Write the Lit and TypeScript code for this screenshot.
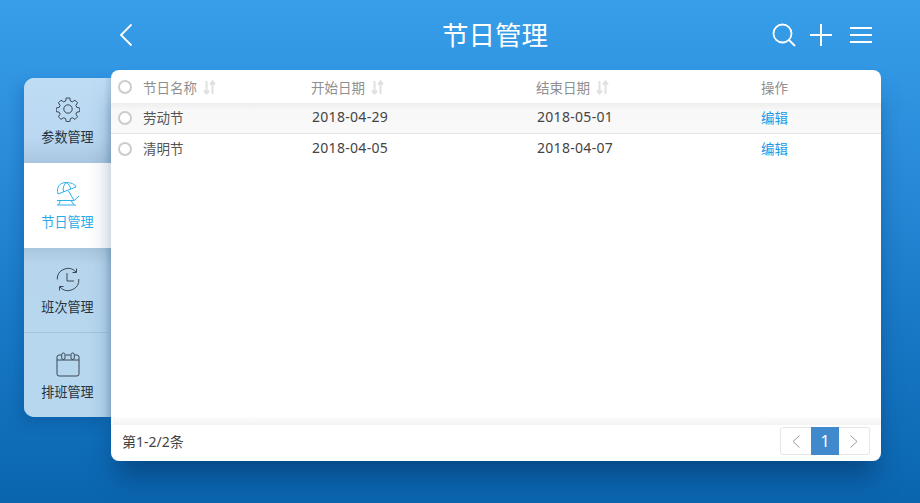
import { LitElement, html, css, svg } from "lit";
import { customElement } from "lit/decorators.js";

const FONT = css`"Noto Sans", "Noto Sans CJK SC", sans-serif`;

const sortIcon = html`<svg class="sort" width="13" height="15" viewBox="0 0 13 15" fill="none" stroke="#e0e0e0">
  <path d="M3.500 1v12M1 10.500 3.500 13.500 6 10.500" stroke-width="2"/><path d="M9.500 14V2M7 4.500 9.500 1.500 12 4.500" stroke-width="2"/></svg>`;

const navIcons = {
  gear: svg`<path d="M10.200 1h3.600l.6 3 2 .9 2.600-1.700 2.600 2.600-1.700 2.600.9 2 3 .6v3.600l-3 .6-.9 2 1.700 2.600-2.600 2.600-2.600-1.700-2 .9-.6 3h-3.600l-.6-3-2-.9-2.600 1.700-2.600-2.600 1.700-2.600-.9-2-3-.6v-3.600l3-.6.9-2-1.700-2.600 2.600-2.600 2.600 1.700 2-.9z"/><circle cx="12" cy="12" r="4.200"/>`,
  umbrella: svg`<path d="M2 12C0 5 4 .5 10 .5c5 .2 9 1.500 10 4.500z"/><path d="M7.500 10C6.500 6 8 2.500 10 .5c2.500 1.500 4.500 3.500 4.500 6.500M12.500 9l5.500 9.500"/><path d="M1 18.500h17l5-4.500M4.500 18.500 2.500 23M15 18.500l3 4.500M1 23h19"/>`,
  clock: svg`<path d="M1.200 12.500A10.800 10.800 0 0 1 20 5M22.800 12A10.800 10.800 0 0 1 4 20"/><path d="M20.500 1.500v4h-4M3.500 23.500v-4h4"/><path d="M11 6v8h7"/>`,
  cal: svg`<path d="M5.500 3H3a2 2 0 0 0-2 2v17a2 2 0 0 0 2 2h18a2 2 0 0 0 2-2V5a2 2 0 0 0-2-2h-2.500M9.500 3h5M1 8h22"/><rect x="5.700" y="1" width="3.300" height="6.500" rx="1.650"/><rect x="15" y="1" width="3.300" height="6.500" rx="1.650"/>`,
};

const nav = [
  { label: "参数管理", icon: navIcons.gear, cls: "first" },
  { label: "节日管理", icon: navIcons.umbrella, cls: "active" },
  { label: "班次管理", icon: navIcons.clock, cls: "after" },
  { label: "排班管理", icon: navIcons.cal, cls: "last" },
];

const rows = [
  { name: "劳动节", start: "2018-04-29", end: "2018-05-01", cls: "alt" },
  { name: "清明节", start: "2018-04-05", end: "2018-04-07", cls: "" },
];

@customElement("app-root")
export class AppRoot extends LitElement {
  static styles = css`
    :host {
      display: block;
      width: 920px;
      height: 503px;
      overflow: hidden;
      font-family: ${FONT};
    }
    .page {
      height: 503px;
      display: flex;
      flex-direction: column;
      background: linear-gradient(180deg, #379ee9 0%, #2d90de 25%, #1a7bc9 60%, #0a65ae 100%);
    }
    .top {
      height: 70px;
      flex: none;
      display: flex;
      align-items: center;
      padding: 0 48px 0 119px;
      color: #fff;
    }
    .title {
      flex: 1;
      text-align: center;
      font-size: 26.500px;
      line-height: 70px;
      color: #fff;
      padding-left: 85px;
    }
    .actions { display: flex; align-items: center; gap: 14px; }
    .top svg { display: block; }
    .menu { margin-left: 4px; }
    .main { flex: 1; display: flex; align-items: flex-start; padding-left: 24px; }
    .side {
      width: 87px;
      height: 339px;
      margin-top: 8px;
      border-radius: 10px 0 0 10px;
      overflow: hidden;
      background: #b7d7ef;
      box-shadow: -4px 6px 14px rgba(5, 60, 120, .25);
      display: flex;
      flex-direction: column;
      flex: none;
    }
    .item {
      --edge: linear-gradient(90deg, rgba(90, 120, 150, 0) 92%, rgba(90, 120, 150, .2) 100%);
      height: 85px;
      flex: none;
      display: flex;
      flex-direction: column;
      align-items: center;
      padding-top: 19px;
      box-sizing: border-box;
      color: #27323d;
      font-size: 13.100px;
      gap: 6px;
      line-height: 18px;
      background: var(--edge), #b7d7ef;
    }
    .item svg { display: block; fill: none; stroke: #3a4654; stroke-width: 1; }
    .item.first { background: var(--edge), linear-gradient(180deg, #bfdcf5 0%, #bad8f1 70%, #a8c6df 100%); }
    .item.active { background: #fff; color: #29abe9; }
    .item.active svg { stroke: #2bb0ec; }
    .item.after {
      background: var(--edge), linear-gradient(180deg, #a8c6dd 0%, #b7d6ee 20%, #b7d7ef 100%);
      border-bottom: 1px solid #a6c3da;
    }
    .item.last { height: 84px; }
    .card {
      width: 770px;
      height: 391px;
      flex: none;
      background: #fff;
      border-radius: 8px;
      display: flex;
      flex-direction: column;
      box-shadow: 0 22px 26px -6px rgba(3, 50, 100, .55);
      overflow: hidden;
    }
    .row {
      display: grid;
      grid-template-columns: 32px 169px 225px 224px 1fr;
      align-items: center;
      flex: none;
      font-size: 14px;
      color: #444;
      letter-spacing: .3px;
    }
    .head { height: 33px; color: #8f8f8f; font-size: 13.500px; letter-spacing: 0; }
    .head .cell { display: flex; align-items: center; gap: 6px; }
    .head .shift { margin-left: -1px; }
    .sort { display: block; margin-top: 1px; }
    .body-row { height: 31px; box-sizing: border-box; border-bottom: 1px solid #fff; padding-bottom: 2px; }
    .body-row.alt {
      background: linear-gradient(180deg, #eeeeee 0%, #f8f8f8 25%, #f9f9f9 100%);
      border-bottom: 1px solid #e4e4e4;
    }
    .date { padding-bottom: 2px; }
    .name { font-size: 13.500px; color: #555; letter-spacing: 0; }
    .check {
      width: 10px;
      height: 10px;
      border: 2px solid #cccccc;
      border-radius: 50%;
      margin: 1px 0 0 7px;
      background: #fff;
    }
    .link { color: #1a9ae6; font-size: 13.500px; letter-spacing: 0; }
    .spacer { flex: 1; }
    .foot-shade { height: 8px; flex: none; margin-left: 2px; background: linear-gradient(180deg, #fcfcfc, #f3f3f3); }
    .foot {
      height: 36px;
      box-sizing: border-box;
      flex: none;
      display: flex;
      align-items: center;
      justify-content: space-between;
      padding: 0 11px 4px;
      font-size: 14px;
      color: #444;
    }
    .pager {
      display: flex;
      height: 28px;
      width: 90px;
      box-sizing: border-box;
      border: 1px solid #e6e6e6;
      border-radius: 3px;
    }
    .pager > div { display: flex; align-items: center; justify-content: center; height: 28px; margin-top: -1px; }
    .pg { width: 30px; }
    .cur { width: 28px; background: #4089cc; color: #fff; font-size: 16px; }
    .pager svg { display: block; }
  `;

  render() {
    return html`<div class="page">
      <div class="top">
        <svg width="14" height="24" viewBox="0 0 14 24" fill="none" stroke="#fff" stroke-width="1.800"><path d="M12.500 1.500 2 12l10.500 10.500"/></svg>
        <div class="title">节日管理</div>
        <div class="actions">
          <svg width="24" height="24" viewBox="0 0 24 24" fill="none" stroke="#fff" stroke-width="1.800"><circle cx="10.500" cy="10.500" r="9"/><path d="M17 17l6 6"/></svg>
          <svg width="22" height="22" viewBox="0 0 22 22" fill="none" stroke="#fff" stroke-width="2"><path d="M0 11h22M11 0v22"/></svg>
          <svg class="menu" width="22" height="16" viewBox="0 0 22 16" fill="none" stroke="#fff" stroke-width="2"><path d="M0 1h22M0 8h22M0 15h22"/></svg>
        </div>
      </div>
      <div class="main">
        <div class="side">
          ${nav.map(n => html`<div class="item ${n.cls}">
            <svg width="24" height="25" viewBox="0 0 24 25">${n.icon}</svg>
            <span>${n.label}</span>
          </div>`)}
        </div>
        <div class="card">
          <div class="row head">
            <div class="check"></div>
            <div class="cell">节日名称 ${sortIcon}</div>
            <div class="cell shift">开始日期 ${sortIcon}</div>
            <div class="cell shift">结束日期 ${sortIcon}</div>
            <div class="cell">操作</div>
          </div>
          ${rows.map(r => html`<div class="row body-row ${r.cls}">
            <div class="check"></div>
            <div class="name">${r.name}</div>
            <div class="date">${r.start}</div>
            <div class="date">${r.end}</div>
            <div class="link">编辑</div>
          </div>`)}
          <div class="spacer"></div>
          <div class="foot-shade"></div>
          <div class="foot">
            <span>第1-2/2条</span>
            <div class="pager">
              <div class="pg"><svg width="8" height="13" viewBox="0 0 8 13" fill="none" stroke="#999" stroke-width="1"><path d="M7.500 .5 1 6.500l6.500 6"/></svg></div>
              <div class="cur">1</div>
              <div class="pg"><svg width="8" height="13" viewBox="0 0 8 13" fill="none" stroke="#999" stroke-width="1"><path d="M.5 .5 7 6.500l-6.500 6"/></svg></div>
            </div>
          </div>
        </div>
      </div>
    </div>`;
  }
}
